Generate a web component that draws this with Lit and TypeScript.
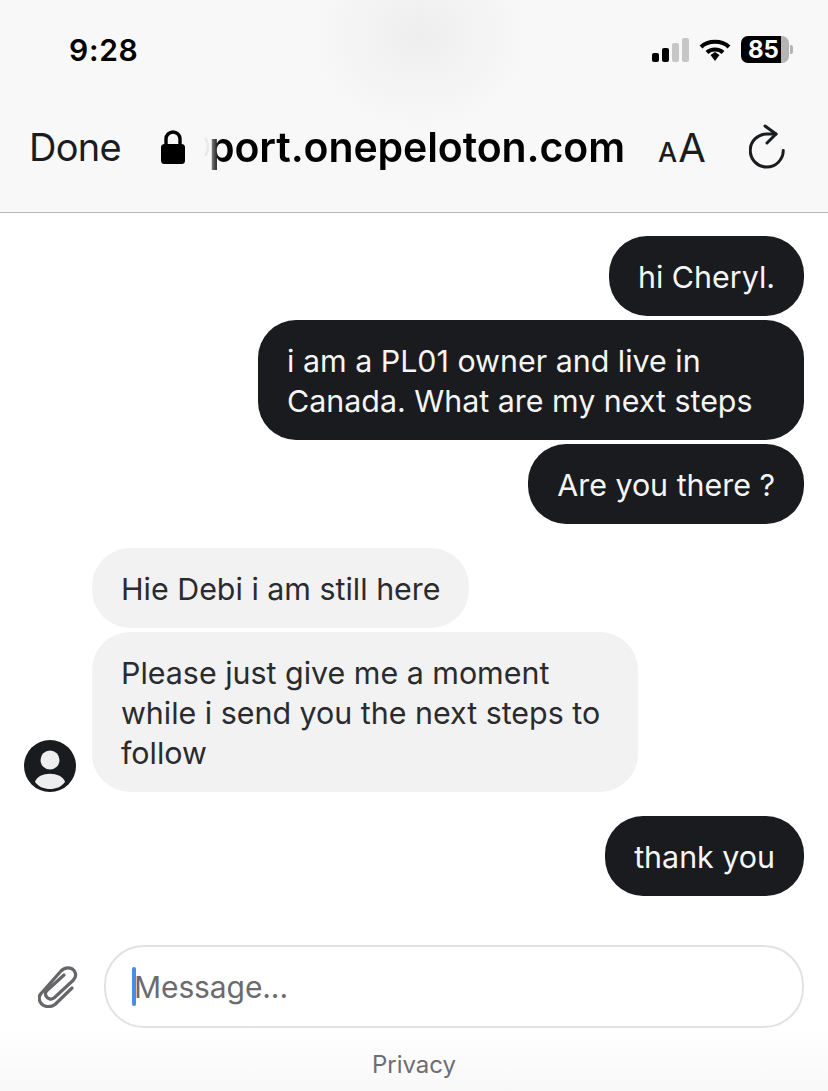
import { LitElement, html, css } from 'lit';
import { customElement } from 'lit/decorators.js';

const OUTGOING_TOP = ['hi Cheryl.', 'i am a PL01 owner and live in Canada. What are my next steps', 'Are you there ?'];
const INCOMING = ['Hie Debi i am still here', 'Please just give me a moment while i send you the next steps to follow'];

@customElement('app-root')
export class AppRoot extends LitElement {
  static styles = css`
    :host {
      display: block;
      width: 828px;
      height: 1091px;
      overflow: hidden;
      background: #fff;
      font-family: Inter, 'Liberation Sans', sans-serif;
      color: #000;
    }
    .page {
      height: 1091px;
      display: flex;
      flex-direction: column;
    }
    header {
      flex: none;
      box-sizing: border-box;
      border-bottom: 1px solid #b9b9bb;
      height: 213px;
      background:
        radial-gradient(ellipse 110px 95px at 420px 35px, #eeeeef 0%, rgba(238, 238, 239, 0) 100%),
        #f8f8f8;
    }
    .status {
      height: 99px;
      display: flex;
      align-items: center;
      justify-content: space-between;
      padding: 0 35px 0 69px;
    }
    .time {
      font-size: 30px;
      font-weight: 600;
      letter-spacing: 0.7px;
    }
    .indicators {
      display: flex;
      align-items: center;
      gap: 10px;
    }
    .battery {
      display: flex;
      align-items: center;
      gap: 1px;
    }
    .battery-body {
      width: 48px;
      height: 27px;
      border-radius: 7px;
      font-size: 24px;
      font-weight: 700;
      line-height: 27px;
      color: #fff;
      padding-left: 7px;
      box-sizing: border-box;
      background: linear-gradient(90deg, #000 0 40px, #b5b5b5 40px);
    }
    .battery-cap {
      width: 3px;
      height: 9px;
      background: #b5b5b5;
      border-radius: 0 2px 2px 0;
    }
    .nav {
      display: flex;
      align-items: center;
      height: 96px;
      padding-left: 29px;
    }
    .done {
      font-size: 38px;
      color: #1a1c20;
      letter-spacing: -0.7px;
      width: 131px;
    }
    .url {
      display: flex;
      align-items: center;
      width: 498px;
    }
    .ghost {
      margin-left: 18px;
    }
    .url-text {
      font-size: 41px;
      font-weight: 600;
      letter-spacing: -0.1px;
      white-space: nowrap;
      -webkit-mask-image: linear-gradient(90deg, rgba(0, 0, 0, 0.3), #000 10px);
      mask-image: linear-gradient(90deg, rgba(0, 0, 0, 0.3), #000 10px);
    }
    .aa {
      color: #1a1c20;
      display: flex;
      align-items: baseline;
      gap: 1px;
      width: 91px;
      font-size: 40px;
      font-weight: 400;
    }
    .aa small {
      font-size: 27px;
      font-weight: 500;
    }
    main {
      flex: 1;
      display: flex;
      flex-direction: column;
      padding: 23px 24px 0;
    }
    .group {
      display: flex;
      flex-direction: column;
      gap: 4px;
      margin-bottom: 24px;
    }
    .group.out {
      align-items: flex-end;
    }
    .bubble {
      box-sizing: border-box;
      max-width: 546px;
      font-size: 30.4px;
      line-height: 40px;
      padding: 21px 29px 19px;
      border-radius: 38px;
      background: #1a1b1f;
      color: #f5f5f6;
    }
    .in .bubble {
      background: #f2f2f3;
      color: #2a2b2e;
    }
    .incoming-row {
      display: flex;
      align-items: flex-end;
      gap: 16px;
    }
    .in {
      align-items: flex-start;
      margin-bottom: 0;
    }
    .spaced {
      margin-top: 24px;
    }
    .composer {
      display: flex;
      align-items: center;
      margin-top: 25px;
      margin-left: 14px;
      gap: 26px;
    }
    .input {
      width: 700px;
      height: 83px;
      box-sizing: border-box;
      border: 2px solid #e2e2e4;
      border-radius: 40px;
      background: #fff;
      display: flex;
      align-items: center;
      padding-left: 26px;
      font-size: 30px;
      letter-spacing: -0.1px;
      color: #6b6b6f;
    }
    .caret {
      width: 4px;
      height: 39px;
      margin-right: -2px;
      border-radius: 2px;
      background: #4a8bea;
      flex: none;
    }
    footer {
      height: 64px;
      flex: none;
      text-align: center;
      font-size: 24px;
      color: #6d6d72;
      line-height: 74px;
      background: linear-gradient(180deg, #fff, #f8f8f9);
    }
    svg {
      display: block;
      flex: none;
    }
  `;

  render() {
    return html`
      <div class="page">
        <header>
          <div class="status">
            <span class="time">9:28</span>
            <div class="indicators">
              <svg width="37" height="24" viewBox="0 0 37 24" fill="#c6c6c6">
                <rect x="0" y="15" width="7" height="9" rx="2" fill="#000"/>
                <rect x="10" y="10" width="7" height="14" rx="2" fill="#000"/>
                <rect x="20" y="5" width="7" height="19" rx="2"/>
                <rect x="30" y="0" width="7" height="24" rx="2"/>
              </svg>
              <svg width="32" height="24" viewBox="0 0 32 24" fill="none" stroke="#000" stroke-width="4">
                <path d="M2 9 C9 2 23 2 30 9"/>
                <path d="M8 14.5 C12 10.5 20 10.5 24 14.5"/>
                <path d="M11.5 17 L16 14 L20.5 17 L16 23 Z" fill="#000" stroke="none"/>
              </svg>
              <div class="battery">
                <div class="battery-body">85</div>
                <div class="battery-cap"></div>
              </div>
            </div>
          </div>
          <div class="nav">
            <span class="done">Done</span>
            <div class="url">
              <svg width="26" height="36" viewBox="0 0 26 36">
                <path d="M6 16 V10 a7 7 0 0 1 14 0 V16" fill="none" stroke="#000" stroke-width="3.4"/>
                <rect x="1" y="15" width="24" height="20" rx="3.5" fill="#000"/>
              </svg>
              <svg class="ghost" width="5" height="20" viewBox="0 0 5 20" fill="none" stroke="#e9e9e9" stroke-width="2.5">
                <path d="M1 1 C5 6 5 14 1 19"/>
              </svg>
              <span class="url-text">port.onepeloton.com</span>
            </div>
            <div class="aa"><small>A</small>A</div>
            <svg width="38" height="46" viewBox="0 0 38 46" fill="none" stroke="#1a1c20" stroke-width="3" stroke-linecap="round" stroke-linejoin="round">
              <path d="M27 10 H18 A16.5 16.5 0 1 0 34.25 26.5"/>
              <path d="M16 2 L27 10 L18 19"/>
            </svg>
          </div>
        </header>
        <main>
          <div class="group out">
            ${OUTGOING_TOP.map((t) => html`<div class="bubble">${t}</div>`)}
          </div>
          <div class="incoming-row">
            <svg width="52" height="52" viewBox="0 0 52 52">
              <circle cx="26" cy="26" r="26" fill="#1a1b1f"/>
              <circle cx="26" cy="20" r="9.5" fill="#eeeeef"/>
              <path d="M11 42 C14 31 38 31 41 42 C37 47 32 49 26 49 C20 49 15 47 11 42 Z" fill="#eeeeef"/>
            </svg>
            <div class="group in">
              ${INCOMING.map((t) => html`<div class="bubble">${t}</div>`)}
            </div>
          </div>
          <div class="group out spaced">
            <div class="bubble">thank you</div>
          </div>
          <div class="composer">
            <svg width="40" height="42" viewBox="0 0 40 42" fill="none" stroke="#66666a" stroke-width="3.2" stroke-linecap="round" stroke-linejoin="round">
              <path d="M34 22 L17 38.5 C12 42 5 41 2.5 36.5 C0.5 33 1 29.5 3.5 27 L23 5 C27 1 33 1 36 4.5 C38.5 8 38 11.5 35 14.5 L16 32 C13 34 9.5 33 8 30 C7 28 7.5 26 9 24.5 L26 9"/>
            </svg>
            <div class="input"><span class="caret"></span>Message...</div>
          </div>
        </main>
        <footer>Privacy</footer>
      </div>
    `;
  }
}
